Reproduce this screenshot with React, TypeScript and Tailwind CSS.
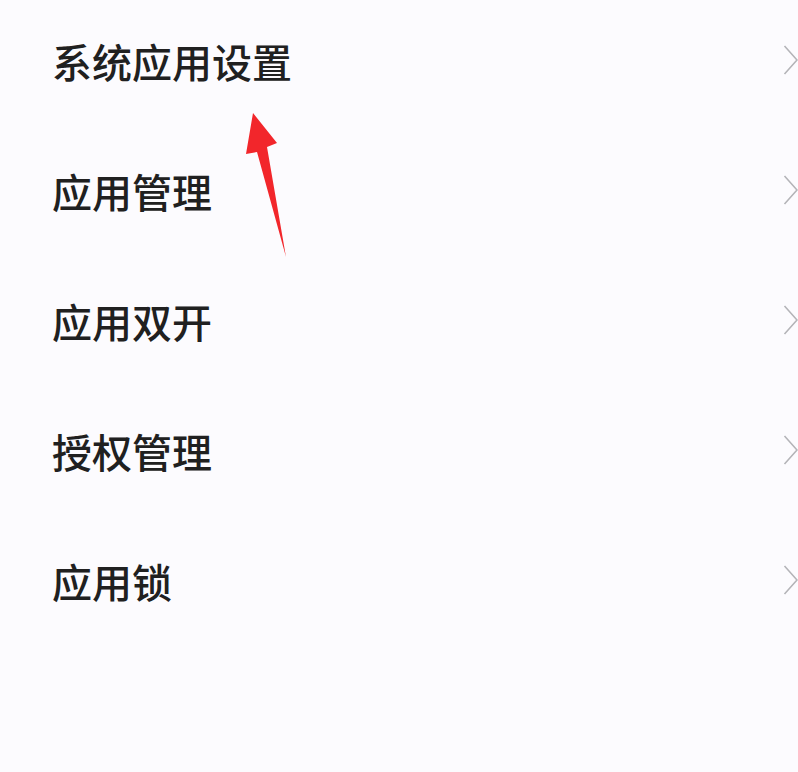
const items = ['系统应用设置', '应用管理', '应用双开', '授权管理', '应用锁'];

function Chevron() {
  return (
    <svg width="16" height="32" viewBox="0 0 16 32" className="shrink-0">
      <polyline points="1.5,2 14,16 1.5,30" fill="none" stroke="#b4b4b8" strokeWidth="1.6" strokeLinejoin="miter" />
    </svg>
  );
}

export default function App() {
  return (
    <div
      className="relative w-[798px] h-[772px] overflow-hidden bg-[#fcfbfe]"
      style={{ fontFamily: '"Noto Sans CJK SC", "Noto Sans", sans-serif' }}
    >
      <div className="flex flex-col">
        {items.map((label) => (
          <div key={label} className="flex h-[130px] items-center justify-between pb-[8px] pl-[52px] pr-0">
            <span className="text-[40px] leading-none font-medium text-[#202020]">{label}</span>
            <div className="translate-x-[1px] -translate-y-[1px]">
              <Chevron />
            </div>
          </div>
        ))}
      </div>

      {/* red annotation arrow */}
      <svg className="absolute left-0 top-0" width="798" height="772" viewBox="0 0 798 772">
        <polygon
          points="253,113 277,143 267,147 286,257 257,152 246,154"
          fill="#f2262b"
        />
      </svg>
    </div>
  );
}
